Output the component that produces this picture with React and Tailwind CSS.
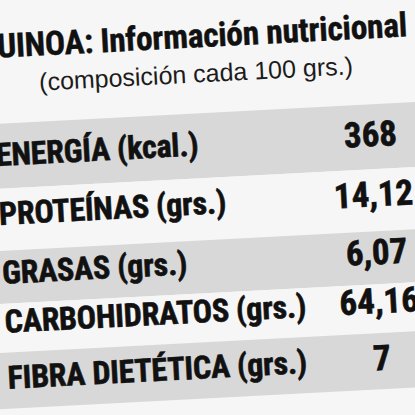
import React from "react";

const rows = [
  { label: "ENERGÍA (kcal.)", value: "368", box: "h-[65px] pb-[4px] bg-[#d8d8d8]" },
  { label: "PROTEÍNAS (grs.)", value: "14,12", box: "h-[62px] pb-[12px] bg-[#f6f6f6]" },
  { label: "GRASAS (grs.)", value: "6,07", box: "h-[53px] pb-[10px] bg-[#d8d8d8]" },
  { label: "CARBOHIDRATOS (grs.)", value: "64,16", box: "h-[49px] pb-[14px] bg-[#f6f6f6]" },
  { label: "FIBRA DIETÉTICA (grs.)", value: "7", box: "h-[56px] pb-[6px] bg-[#d8d8d8]" },
];

const narrow = {
  fontFamily: "'Liberation Sans Narrow', 'Roboto Condensed', 'DejaVu Sans Condensed', 'Liberation Sans', sans-serif",
};

export default function App() {
  return (
    <div className="w-[415px] h-[415px] overflow-hidden bg-[#f6f6f6]">
      <div className="w-[500px] h-[460px] -ml-[42px] -mt-[22px] -rotate-3 bg-[#f6f6f6] text-[#111]">
        <div className="h-[135px] pt-[40px]">
          <div
            className="pr-[14px] text-center text-[33.5px] leading-[35px] font-bold whitespace-nowrap tracking-[-0.3px] [-webkit-text-stroke:0.4px_#111]"
            style={narrow}
          >
            QUINOA: Información nutricional
          </div>
          <div
            className="mt-[8px] pr-[10px] text-center text-[25px] leading-[25px] text-[#1c1c1c] whitespace-nowrap"
            style={{ fontFamily: "'Liberation Sans', Arial, sans-serif" }}
          >
            (composición cada 100 grs.)
          </div>
        </div>

        {rows.map((row) => (
          <div key={row.label} className={`flex items-center pl-[41px] pr-[39px] ${row.box}`}>
            <div
              className="flex-1 text-[32px] leading-none font-bold whitespace-nowrap tracking-[-0.2px] [-webkit-text-stroke:0.6px_#111]"
              style={narrow}
            >
              {row.label}
            </div>
            <div
              className="w-[90px] text-center text-[35px] leading-none font-bold whitespace-nowrap [-webkit-text-stroke:0.6px_#111]"
              style={narrow}
            >
              {row.value}
            </div>
          </div>
        ))}
      </div>
    </div>
  );
}
